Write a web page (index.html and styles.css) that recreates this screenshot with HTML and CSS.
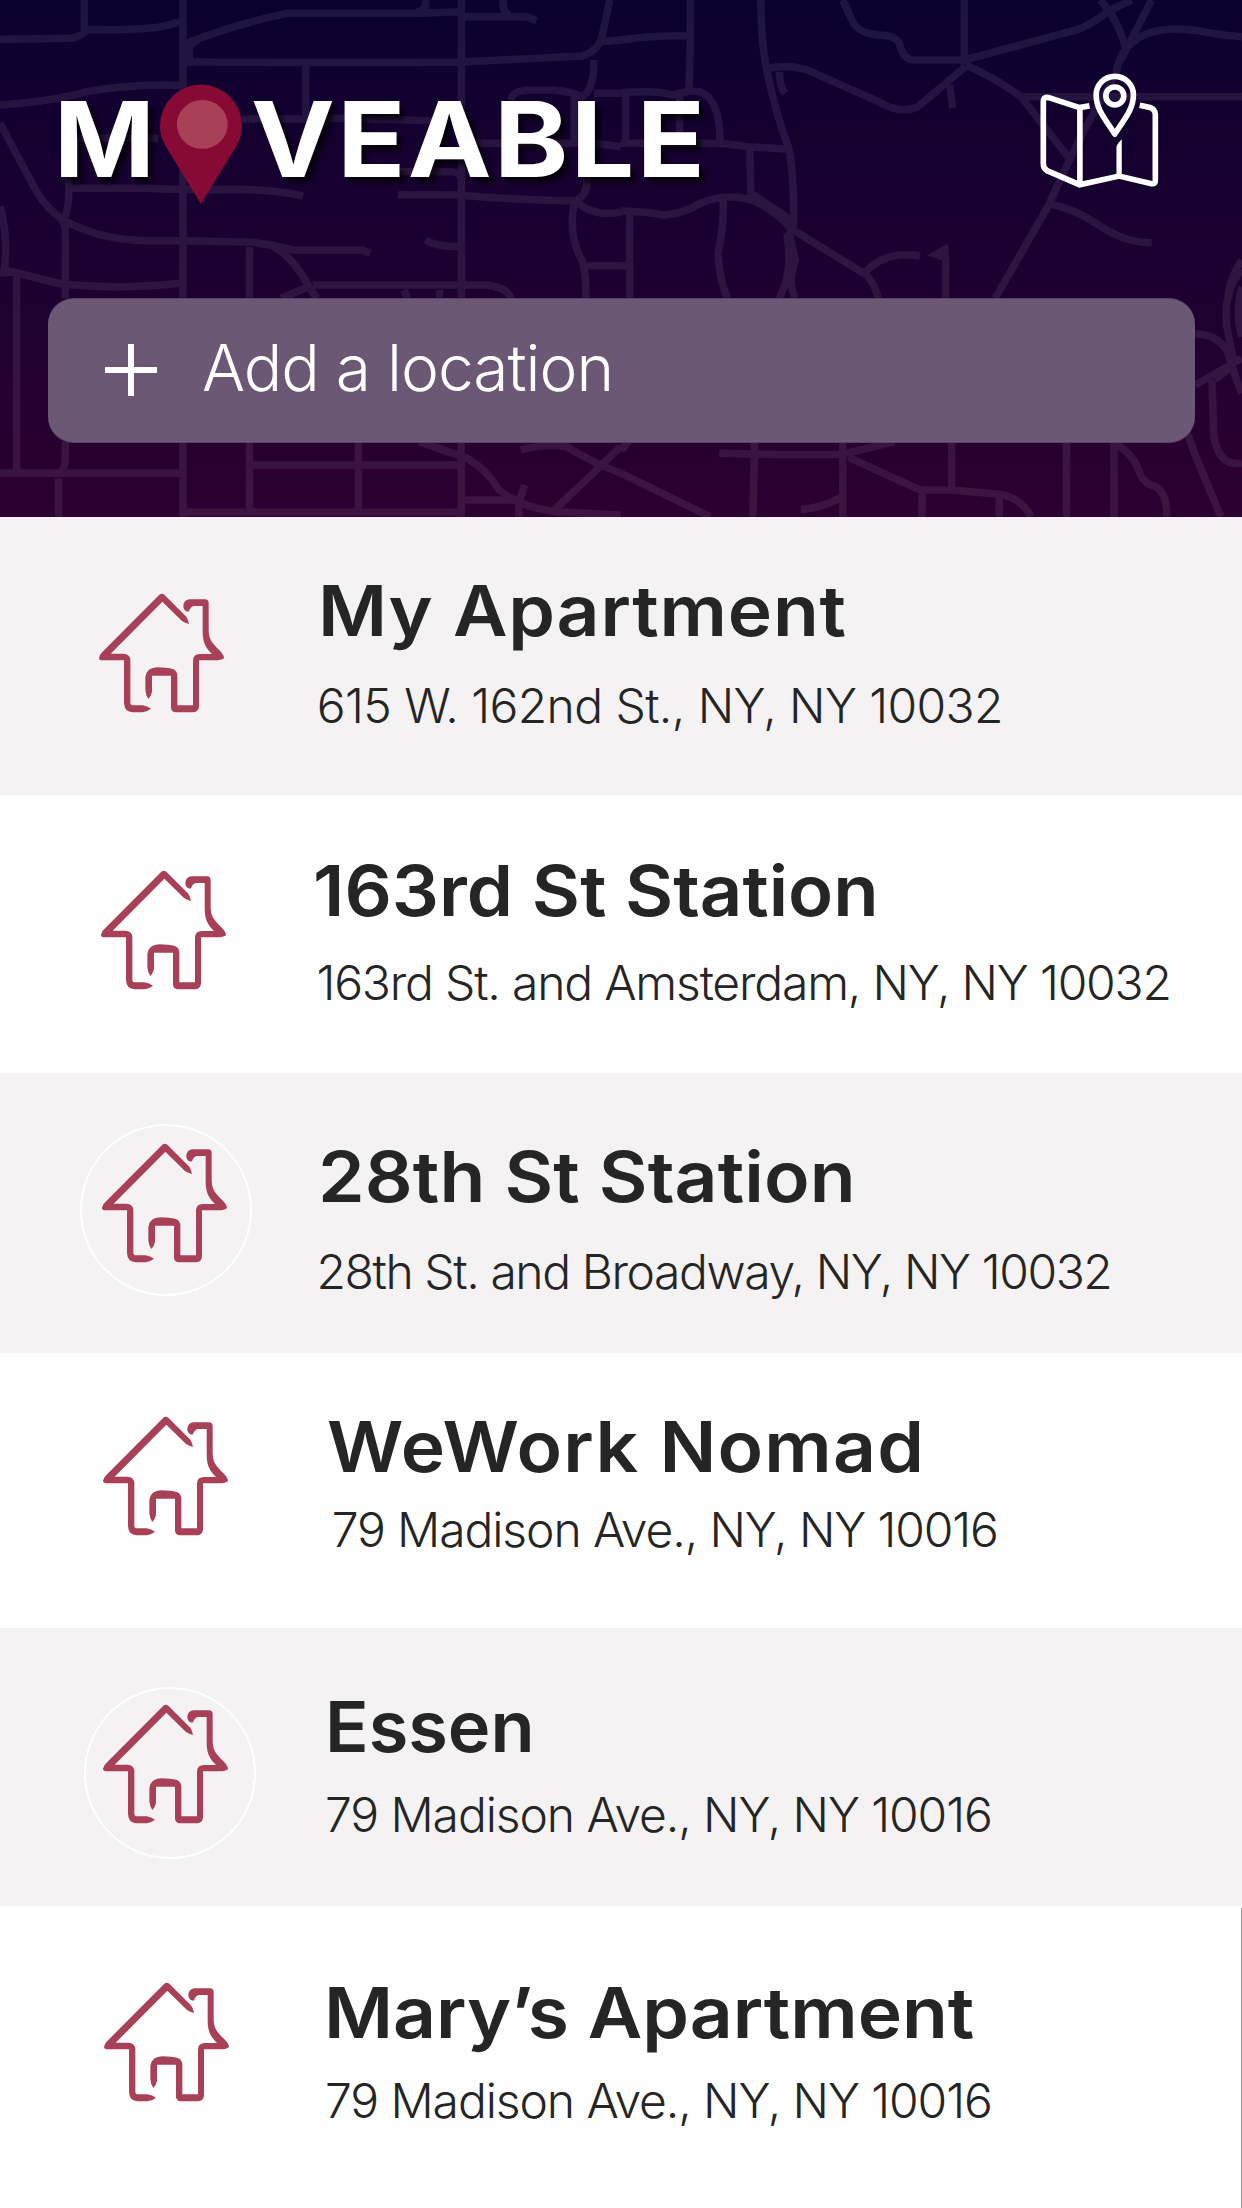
FILE: index.html
```html
<!DOCTYPE html>
<html lang="en">
<head>
<meta charset="utf-8">
<title>Moveable</title>
<link rel="stylesheet" href="styles.css">
</head>
<body>
<svg class="defs" aria-hidden="true">
  <symbol id="house" viewBox="84 68 380 360">
    <path d="M268 73Q275 68 283 73L349 139Q356 150 357 161Q345 158 336 152L277 94L122 250H160Q180 250 181 270V398Q181 405 190 405H218Q232 407 243 415Q232 424 218 426H188Q163 425 162 398V270H95Q86 268 87 262Q90 250 100 242Z"/>
    <path d="M357 123Q350 125 344 119Q338 112 341 100Q346 88 358 87H405Q416 88 416 98V180C416 215 435 225 455 247Q462 256 462 264Q455 269 445 270H387V408Q386 425 370 426H318Q304 425 303 412V316H246V365Q243 378 235 386Q227 376 226 360V320Q230 292 262 291Q290 292 308 296Q322 300 322 318V405H369V270Q370 251 390 251H426C410 235 398 220 398 185V107H372Q362 108 357 123Z"/>
  </symbol>
</svg>

<main class="app">
  <header class="header">
    <svg class="streets" viewBox="0 0 1242 517" aria-hidden="true">
      <g transform="scale(.396 .3333)">
        <path d="M462 0V895M1165 0V895M213 0V95M0 118L180 115Q205 110 222 88Q330 92 400 82Q440 72 460 62M470 130Q600 70 725 40H1060L1165 35M1165 50H1330L1355 62M1075 0Q1080 30 1050 38M1270 0Q1270 45 1290 48M470 185Q800 190 1165 186L1470 168Q1510 155 1520 110L1540 0M1520 125L1568 120M478 185V150Q480 130 500 120M772 190V350M0 315Q130 305 220 275Q330 250 460 256M610 357H760Q830 350 1090 362M190 415H400M1175 430H1500L1568 440"/>
        <path d="M0 370L90 570Q120 630 160 660Q250 720 370 722H460L640 727Q690 735 740 750H915L935 760M165 895V690Q165 670 150 650M165 650Q178 600 172 530M180 565H370Q450 570 600 568Q700 570 765 588M0 620Q20 700 12 800V810L155 852Q300 870 455 850M0 820L40 815M42 830V895M630 740V895M690 740Q740 770 780 860L800 895M780 860L710 895M790 855H1230Q1285 865 1290 895M1020 870L1030 895M1110 870V895M1075 720Q1100 740 1160 740M1005 585H1155Q1300 600 1450 603Q1485 590 1482 530M1010 515H1140Q1170 520 1165 550M1450 610Q1435 700 1465 770Q1480 800 1480 895M1480 797H1568M1460 610Q1500 650 1568 637M1290 300Q1295 270 1340 270H1400Q1440 275 1470 290Q1500 270 1500 180M1500 280H1568M1450 290V440"/>
      </g>
      <g transform="translate(621 0) scale(.396 .3333)">
        <path d="M175 0V130L172 275M0 120Q100 105 170 108M0 278Q90 270 130 285Q170 270 200 275Q250 300 250 420M12 280V420M148 290V420M0 430H200Q260 428 320 440L420 448M325 445L328 590M353 0Q355 150 370 220Q390 340 425 450Q440 560 435 690L420 710Q430 790 415 850L400 895M435 690L620 825Q640 850 650 895M0 632Q60 635 110 645Q160 640 200 610Q270 575 340 605Q400 640 430 690M328 580L430 660M258 600Q260 680 245 760Q250 850 270 895M22 640V895M0 797H22M425 700L440 780Q420 850 440 895M370 205Q430 190 480 215L650 305Q710 345 750 320L870 200M400 215Q400 260 415 280"/>
        <path d="M560 0L585 65Q600 100 650 105Q700 105 705 140Q715 180 740 180H870M867 0V180L1150 90Q1180 80 1235 30L1290 0M1210 0L1235 35Q1270 110 1275 150L1340 0M1568 110Q1500 105 1460 92Q1350 75 1300 120Q1260 150 1250 220L1165 400Q1100 560 1080 615L945 895M870 195Q940 230 1010 290L1135 480M1010 290H1568M830 255L838 325M1080 610Q1150 630 1200 670Q1270 730 1340 728M618 815Q670 750 755 768M820 770V895M1568 780Q1530 850 1535 895"/>
        <path class="block" d="M827 730L773 766L827 788Z"/>
      </g>
      <g transform="translate(0 270) scale(.396 .3333)">
        <path d="M42 80V600M0 610H455M165 515V560Q165 600 150 610M148 625V740M462 515V740M630 515V720M905 515V720M470 727H1165M630 585H1165M1165 515V740M1060 515Q1130 545 1180 565Q1230 600 1260 660Q1310 710 1400 725L1568 735M1175 690H1310V740M1400 720L1568 530M1315 540Q1380 520 1430 530Q1500 580 1568 610M1325 645L1310 700"/>
      </g>
      <g transform="translate(621 270) scale(.396 .3333)">
        <path d="M0 540L20 515M0 610L225 740M337 515V560L333 740M248 550Q400 555 560 553L690 515M560 515V740M575 562L755 660H835L950 672Q1010 680 1035 740M835 515V660M760 665V740M955 680V740M455 718Q500 718 560 680M1125 515V740M1245 515V740M1245 520Q1295 550 1310 610Q1320 640 1350 650Q1380 670 1378 740M1430 490Q1450 560 1515 740M1450 192Q1500 190 1530 240Q1550 320 1568 370M1450 345L1568 265M1492 330Q1495 420 1497 500Q1510 590 1568 580M1568 0Q1520 60 1530 170Q1540 240 1550 280M1568 50Q1550 130 1568 200M1500 330L1540 290"/>
      </g>
    </svg>

    <div class="topbar">
      <h1 class="logo" aria-label="Moveable">
        <span class="logo-m">M</span>
        <svg class="logo-pin" viewBox="160 84 82 120" aria-hidden="true">
          <path fill="#870a35" d="M201 204L165 145C161.500 138 160 133 160 126A41 41.500 0 0 1 242 126C242 133 240.500 138 237 145Z"/>
          <ellipse fill="#a84158" cx="202.300" cy="124.400" rx="25.400" ry="24.400"/>
        </svg>
        <span class="logo-rest">VEABLE</span>
      </h1>
      <svg class="map-icon" viewBox="56 36 364 352" aria-label="Map">
        <g fill="none" stroke="#fff" stroke-width="17">
          <path d="M208 138L178 143L88 114Q69 108 69 126V312Q69 326 80 333L178 375L297 349L395 372Q407 374 406 360V165Q406 148 390 143L359 136M179 143V375"/>
          <path stroke-linejoin="round" d="M284 223C262 186 228 152 228 105A56 56 0 0 1 340 105C340 152 306 186 284 223Z"/>
          <circle cx="284" cy="108" r="27"/>
        </g>
        <path fill="#fff" d="M289 352V262Q291 251 305 238V352Z"/>
      </svg>
    </div>

    <div class="add">
      <svg class="plus" viewBox="0 0 52 52" aria-hidden="true"><path stroke="#fff" stroke-width="6" d="M26 0V52M0 26H52"/></svg>
      <span class="add-label">Add a location</span>
    </div>
  </header>

  <ul class="places">
    <li class="place place-home"><svg class="house"><use href="#house"/></svg><div class="info"><h2 class="name">My Apartment</h2><p class="address">615 W. 162nd St., NY, NY 10032</p></div></li>
    <li class="place place-163"><svg class="house"><use href="#house"/></svg><div class="info"><h2 class="name">163rd St Station</h2><p class="address">163rd St. and Amsterdam, NY, NY 10032</p></div></li>
    <li class="place place-28 ringed"><svg class="house"><use href="#house"/></svg><div class="info"><h2 class="name">28th St Station</h2><p class="address">28th St. and Broadway, NY, NY 10032</p></div></li>
    <li class="place place-wework"><svg class="house"><use href="#house"/></svg><div class="info"><h2 class="name">WeWork Nomad</h2><p class="address">79 Madison Ave., NY, NY 10016</p></div></li>
    <li class="place place-essen ringed"><svg class="house"><use href="#house"/></svg><div class="info"><h2 class="name">Essen</h2><p class="address">79 Madison Ave., NY, NY 10016</p></div></li>
    <li class="place place-mary"><svg class="house"><use href="#house"/></svg><div class="info"><h2 class="name">Mary’s Apartment</h2><p class="address">79 Madison Ave., NY, NY 10016</p></div></li>
  </ul>
</main>
</body>
</html>
```
FILE: styles.css
```css
*, *::before, *::after { box-sizing: border-box; }
body, h1, h2, p, ul { margin: 0; padding: 0; }
body { width: 1242px; font-family: Inter, "Liberation Sans", sans-serif; color: #252525; background: #fefefe; }
.defs { display: block; width: 0; height: 0; }
.app { height: 2208px; overflow: hidden; }

.header { position: relative; height: 517px; background: linear-gradient(#0b002f, #2c0030); }
.streets { position: absolute; inset: 0; width: 1242px; height: 517px; opacity: .08; }
.streets path { fill: none; stroke: #fff; stroke-width: 7.5px; vector-effect: non-scaling-stroke; }
.streets .block { fill: #fff; stroke: none; }

.topbar { position: relative; display: flex; justify-content: space-between; align-items: flex-start; height: 298px; padding: 73px 82px 0 54px; }
.logo { display: flex; color: #fff; font-size: 105px; line-height: 131px; font-weight: 660; text-shadow: 5px 6px 4px rgba(0, 0, 0, .65); }
.logo-m { width: 97px; transform: scaleX(1.03); transform-origin: left; }
.logo-pin { width: 82px; height: 120px; margin: 11px 9px 0 9px; }
.logo-rest { letter-spacing: 2.200px; transform: scaleX(1.07); transform-origin: left; }
.map-icon { width: 121px; height: 117px; margin-top: -1px; }

.add { position: relative; display: flex; align-items: center; width: 1147px; height: 145px; margin-left: 48px; padding: 0 0 2px 57px; border: 1px solid #584365; border-width: 1px 0; border-radius: 26px; background: #6b5875; color: #fff; }
.plus { width: 52px; height: 52px; margin-right: 45px; }
.add-label { font-size: 64px; font-weight: 340; letter-spacing: -1px; line-height: 80px; padding-bottom: 3px; }

.places { list-style: none; }
.place { position: relative; display: flex; align-items: flex-start; background: #fefefe; }
.place:nth-child(odd) { background: #f4f2f3; }
.house { width: 126.700px; height: 120px; fill: #a84158; flex: none; margin: var(--icon-y) 0 0 var(--icon-x); position: relative; z-index: 1; }
.info { padding: var(--text-y) 0 0 var(--text-x); white-space: nowrap; }
.name { font-size: 70px; line-height: 72px; font-weight: 600; letter-spacing: var(--name-track); transform: scaleX(var(--stretch)); transform-origin: left; width: max-content; }
.address { font-size: 48px; line-height: 56px; font-weight: 340; letter-spacing: var(--addr-track); margin: var(--gap) 0 0 var(--addr-x); }

.place-home { height: 278px; --icon-x: 98px; --icon-y: 75.500px; --text-x: 93.300px; --text-y: 57.500px; --gap: 31px; --addr-x: -1.200px; --stretch: 1.07; --name-track: .750px; --addr-track: -.600px; }
.place-163 { height: 278px; --icon-x: 100px; --icon-y: 75px; --text-x: 86.300px; --text-y: 59.500px; --gap: 28px; --addr-x: 3.500px; --stretch: 1.06; --name-track: 0; --addr-track: -1.190px; }
.place-28 { height: 280px; --icon-x: 101px; --icon-y: 70px; --text-x: 90.300px; --text-y: 67.500px; --gap: 31px; --addr-x: -1.500px; --stretch: 1.07; --name-track: .100px; --addr-track: -1.410px; --ring-x: 80px; --ring-y: 51px; }
.place-wework { height: 275px; --icon-x: 102px; --icon-y: 63px; --text-x: 98.500px; --text-y: 57.500px; --gap: 19.500px; --addr-x: 4.500px; --stretch: 1.07; --name-track: 1.150px; --addr-track: -1.110px; }
.place-essen { height: 278px; --icon-x: 102px; --icon-y: 76px; --text-x: 96.300px; --text-y: 62.500px; --gap: 24px; --addr-x: 0; --stretch: 1.03; --name-track: 0; --addr-track: -1.090px; --ring-x: 84px; --ring-y: 59px; }
.place-mary { height: 302px; --icon-x: 103px; --icon-y: 76px; --text-x: 94.800px; --text-y: 70.500px; --gap: 24.500px; --addr-x: .500px; --stretch: 1.07; --name-track: 0; --addr-track: -1.090px; }
.ringed::before { content: ""; position: absolute; left: var(--ring-x); top: var(--ring-y); width: 172px; height: 172px; border: 2px solid #fff; border-radius: 50%; }
.place-mary::after { content: ""; position: absolute; top: 2px; right: 0; bottom: 0; width: 1px; background: #bb8d9c; }
```
